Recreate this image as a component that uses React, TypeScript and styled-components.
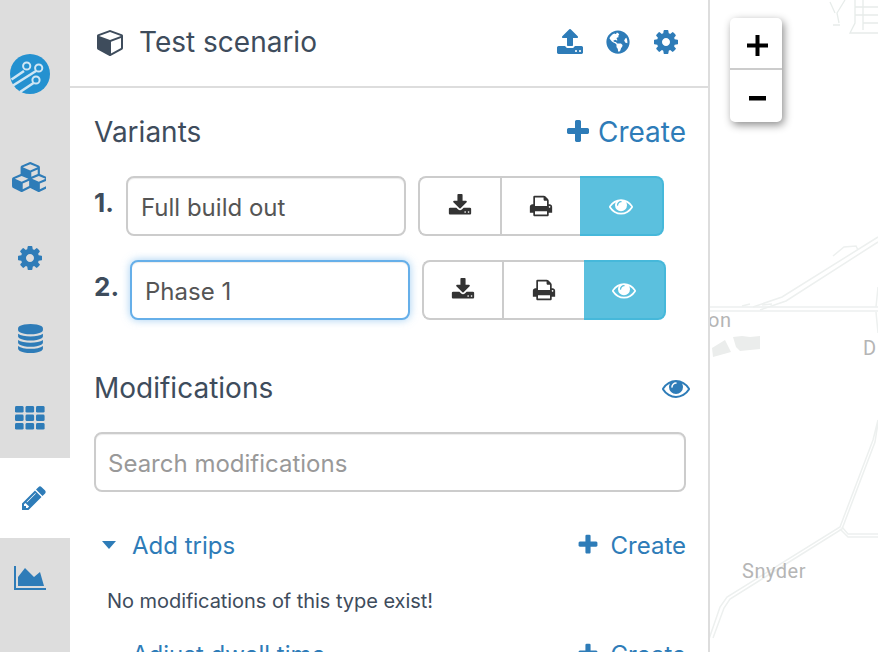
import * as React from 'react';
import styled, { createGlobalStyle } from 'styled-components';
import { FaGlobeAmericas } from 'react-icons/fa';

const blue = '#2e7cb8';
const slate = '#3e4c5c';

const glyphs = {
  plus: 'M1600 736v192q0 40-28 68t-68 28h-416v416q0 40-28 68t-68 28h-192q-40 0-68-28t-28-68v-416h-416q-40 0-68-28t-28-68v-192q0-40 28-68t68-28h416v-416q0-40 28-68t68-28h192q40 0 68 28t28 68v416h416q40 0 68 28t28 68z',
  eye: 'M1664 960q-152-236-381-353 61 104 61 225 0 185-131.5 316.5t-316.5 131.5-316.5-131.5-131.5-316.5q0-121 61-225-229 117-381 353 133 205 333.5 326.5t434.5 121.5 434.5-121.5 333.5-326.5zm-720-384q0-20-14-34t-34-14q-125 0-214.5 89.5t-89.5 214.5q0 20 14 34t34 14 34-14 14-34q0-86 61-147t147-61q20 0 34-14t14-34zm848 384q0 34-20 69-140 230-376.5 368.5t-499.5 138.5-499.5-139-376.5-368q-20-35-20-69t20-69q140-229 376.5-368t499.5-139 499.5 139 376.5 368q20 35 20 69z',
  cube: 'M896 1629l640-349v-636l-640 233v752zm-64-865l698-254-698-254-698 254zm832-252v768q0 35-18 65t-49 47l-704 384q-28 16-61 16t-61-16l-704-384q-31-17-49-47t-18-65v-768q0-40 23-73t61-47l704-256q22-8 44-8t44 8l704 256q38 14 61 47t23 73z',
  cog: 'M1152 896q0-106-75-181t-181-75-181 75-75 181 75 181 181 75 181-75 75-181zm512-109v222q0 12-8 23t-20 13l-185 28q-19 54-39 91 35 50 107 138 10 12 10 25t-9 23q-27 37-99 108t-94 71q-12 0-26-9l-138-108q-44 23-91 38-16 136-29 186-7 28-36 28h-222q-14 0-24.5-8.5t-11.5-21.5l-28-184q-49-16-90-37l-141 107q-10 9-25 9-14 0-25-11-126-114-165-168-7-10-7-23 0-12 8-23 15-21 51-66.5t54-70.5q-27-50-41-99l-183-27q-13-2-21-12.5t-8-23.5v-222q0-12 8-23t19-13l186-28q14-46 39-92-40-57-107-138-10-12-10-24 0-10 9-23 26-36 98.5-107.5t94.5-71.5q13 0 26 10l138 107q44-23 91-38 16-136 29-186 7-28 36-28h222q14 0 24.5 8.5t11.5 21.5l28 184q49 16 90 37l142-107q9-9 24-9 13 0 25 10 129 119 165 170 7 8 7 22 0 12-8 23-15 21-51 66.5t-54 70.5q26 50 41 98l183 28q13 2 21 12.5t8 23.5z',
  download: 'M1344 1344q0-26-19-45t-45-19-45 19-19 45 19 45 45 19 45-19 19-45zm256 0q0-26-19-45t-45-19-45 19-19 45 19 45 45 19 45-19 19-45zm128-224v320q0 40-28 68t-68 28h-1472q-40 0-68-28t-28-68v-320q0-40 28-68t68-28h465l135 136q58 56 136 56t136-56l136-136h464q40 0 68 28t28 68zm-325-569q17 41-14 70l-448 448q-18 19-45 19t-45-19l-448-448q-31-29-14-70 17-39 59-39h256v-448q0-26 19-45t45-19h256q26 0 45 19t19 45v448h256q42 0 59 39z',
  upload: 'M1344 1472q0-26-19-45t-45-19-45 19-19 45 19 45 45 19 45-19 19-45zm256 0q0-26-19-45t-45-19-45 19-19 45 19 45 45 19 45-19 19-45zm128-224v320q0 40-28 68t-68 28h-1472q-40 0-68-28t-28-68v-320q0-40 28-68t68-28h427q21 56 70.5 92t110.5 36h256q61 0 110.5-36t70.5-92h427q40 0 68 28t28 68zm-325-648q-17 40-59 40h-256v448q0 26-19 45t-45 19h-256q-26 0-45-19t-19-45v-448h-256q-42 0-59-40-17-39 14-69l448-448q18-19 45-19t45 19l448 448q31 30 14 69z',
  print: 'M448 1536h896v-256h-896v256zm0-640h896v-384h-160q-40 0-68-28t-28-68v-160h-640v640zm1152 64q0-26-19-45t-45-19-45 19-19 45 19 45 45 19 45-19 19-45zm128 0v416q0 13-9.5 22.5t-22.5 9.5h-224v160q0 40-28 68t-68 28h-960q-40 0-68-28t-28-68v-160h-224q-13 0-22.5-9.5t-9.5-22.5v-416q0-79 56.5-135.5t135.5-56.5h64v-544q0-40 28-68t68-28h672q40 0 88 20t76 48l152 152q28 28 48 76t20 88v256h64q79 0 135.5 56.5t56.5 135.5z',
  database: 'M896 768q237 0 443-43t325-127v170q0 69-103 128t-280 93.5-385 34.5-385-34.5-280-93.5-103-128v-170q119 84 325 127t443 43zm0 768q237 0 443-43t325-127v170q0 69-103 128t-280 93.5-385 34.5-385-34.5-280-93.5-103-128v-170q119 84 325 127t443 43zm0-384q237 0 443-43t325-127v170q0 69-103 128t-280 93.5-385 34.5-385-34.5-280-93.5-103-128v-170q119 84 325 127t443 43zm0-1152q208 0 385 34.5t280 93.5 103 128v128q0 69-103 128t-280 93.5-385 34.5-385-34.5-280-93.5-103-128v-128q0-69 103-128t280-93.5 385-34.5z',
  pencil: 'M491 1536l91-91-235-235-91 91v107h128v128h107zm523-928q0-22-22-22-10 0-17 7l-542 542q-7 7-7 17 0 22 22 22 10 0 17-7l542-542q7-7 7-17zm-54-192l416 416-832 832h-416v-416zm683 96q0 53-37 90l-166 166-416-416 166-165q36-38 90-38 53 0 91 38l235 234q37 39 37 91z',
  chart: 'M2048 1536v128h-2048v-1536h128v1408h1920zm-384-1024l256 896h-1664v-576l448-576 576 576z',
  cubes: 'M640 1632l384-192v-314l-384 164v342zm-64-454l404-173-404-173-404 173zm1088 454l384-192v-314l-384 164v342zm-64-454l404-173-404-173-404 173zm-448-293l384-165v-266l-384 164v267zm-64-379l441-189-441-189-441 189zm1088 518v416q0 36-19 67t-52 47l-448 224q-25 14-57 14t-57-14l-448-224q-4-2-6-4-2 2-6 4l-448 224q-25 14-57 14t-57-14l-448-224q-33-16-52-47t-19-67v-416q0-38 21.5-70t56.5-48l434-186v-400q0-38 21.5-70t56.5-48l448-192q23-10 50-10t50 10l448 192q35 16 56.5 48t21.5 70v400l434 186q36 16 57 48t21 70z'
};

interface GlyphProps {
  name: keyof typeof glyphs;
  size: number;
  wide?: boolean;
}

// font-awesome 4 shapes, the react-icons set only has the newer ones
const Glyph: React.FC<GlyphProps> = ({ name, size, wide }) => (
  <svg
    width={wide ? (size * 2048) / 1792 : size}
    height={size}
    viewBox={wide ? '0 0 2048 1792' : '0 0 1792 1792'}
    fill="currentColor"
  >
    <path fillRule={name === 'chart' ? 'nonzero' : 'evenodd'} d={glyphs[name]} />
  </svg>
);

const GridIcon: React.FC = () => (
  <svg width="30" height="24" viewBox="0 0 30 24" fill="currentColor">
    {[0, 8.5, 17].map(y =>
      [0, 10.5, 21].map(x => <rect key={`${x}-${y}`} x={x} y={y} width="8.6" height="6.6" rx="1.4" />)
    )}
  </svg>
);

const variants = [
  { label: '1.', name: 'Full build out', focused: false, widths: [82, 80, 84], numberWidth: 32 },
  { label: '2.', name: 'Phase 1', focused: true, widths: [80, 82, 82], numberWidth: 36 }
];

const App: React.FC = () => (
  <>
    <GlobalStyle />
    <Page>
      <Sidebar>
        <LogoItem>
          <Logo />
        </LogoItem>
        <NavItem $shift>
          <Glyph name="cubes" size={30} wide />
        </NavItem>
        <NavItem>
          <Glyph name="cog" size={28} />
        </NavItem>
        <NavItem>
          <Glyph name="database" size={29} />
        </NavItem>
        <NavItem>
          <GridIcon />
        </NavItem>
        <NavItem $active>
          <Glyph name="pencil" size={28} />
        </NavItem>
        <NavItem>
          <Glyph name="chart" size={28} wide />
        </NavItem>
      </Sidebar>
      <Panel>
        <PanelHeader>
          <Title>
            <Glyph name="cube" size={28} />
            <span>Test scenario</span>
          </Title>
          <HeaderActions>
            <Glyph name="upload" size={28} />
            <FaGlobeAmericas size={24} />
            <Glyph name="cog" size={28} />
          </HeaderActions>
        </PanelHeader>
        <PanelBody>
          <SectionHeading>
            <HeadingText>Variants</HeadingText>
            <CreateLink>
              <Glyph name="plus" size={28} />
              <span>Create</span>
            </CreateLink>
          </SectionHeading>
          {variants.map(v => (
            <VariantRow key={v.label}>
              <VariantNumber $width={v.numberWidth}>{v.label}</VariantNumber>
              <VariantInput $focused={v.focused} defaultValue={v.name} />
              <ButtonGroup>
                <GroupButton $width={v.widths[0]}>
                  <Glyph name="download" size={24} />
                </GroupButton>
                <GroupButton $width={v.widths[1]}>
                  <Glyph name="print" size={24} />
                </GroupButton>
                <GroupButton $width={v.widths[2]} $active>
                  <Glyph name="eye" size={24} />
                </GroupButton>
              </ButtonGroup>
            </VariantRow>
          ))}
          <ModificationsHeading>
            <HeadingText>Modifications</HeadingText>
            <EyeToggle>
              <Glyph name="eye" size={28} />
            </EyeToggle>
          </ModificationsHeading>
          <SearchInput placeholder="Search modifications" />
          <TypeRow>
            <TypeName>
              <Caret />
              <span>Add trips</span>
            </TypeName>
            <TypeCreate>
              <Glyph name="plus" size={24} />
              <span>Create</span>
            </TypeCreate>
          </TypeRow>
          <EmptyNote>No modifications of this type exist!</EmptyNote>
          <NextTypeRow>
            <TypeName>
              <CaretSpace />
              <span>Adjust dwell time</span>
            </TypeName>
            <TypeCreate>
              <Glyph name="plus" size={24} />
              <span>Create</span>
            </TypeCreate>
          </NextTypeRow>
        </PanelBody>
      </Panel>
      <MapArea>
        <MapDrawing />
        <ZoomControl>
          <ZoomButton $top>
            <svg width="21" height="21" viewBox="0 0 21 21">
              <path d="M8.5 0h4v8.5H21v4h-8.5V21h-4v-8.5H0v-4h8.5z" fill="#000" />
            </svg>
          </ZoomButton>
          <ZoomButton>
            <svg width="17" height="5" viewBox="0 0 17 5">
              <rect width="17" height="4.5" fill="#000" />
            </svg>
          </ZoomButton>
        </ZoomControl>
      </MapArea>
    </Page>
  </>
);

const Logo: React.FC = () => (
  <svg width="40" height="40" viewBox="0 0 40 40">
    <circle cx="20" cy="20" r="20" fill="#2491d0" />
    <g fill="none" stroke="#cfe6f4">
      <g strokeWidth="2.6">
        <path d="M1.5 25.5L14 17" />
        <path d="M3 31.5L26 17" />
        <path d="M10 38L23.5 29" />
      </g>
      <g strokeWidth="2">
        <circle cx="16.7" cy="12" r="3.6" />
        <circle cx="28.7" cy="14" r="3.6" />
        <circle cx="26" cy="26" r="3.6" />
      </g>
    </g>
  </svg>
);

const MapDrawing: React.FC = () => (
  <MapSvg viewBox="0 0 168 652">
    <g fill="none" stroke="#edf0ef" strokeWidth="1.5">
      <path d="M0 307h168M0 311h168" />
      <path d="M43 307l29-10L168 237M50 310l26-9L168 242" />
      <path d="M123 256l11-9 12-1 2 4" />
      <path d="M32 306l8-2M52 305l10-1" />
      <path d="M168 287l-2 20M166 312l2 21" />
      <path d="M168 420l-5 20-33 87L17 597l-7 10-11 32M168 423l-3 19-33 87L20 599l-6 9-11 30" />
      <path d="M132 527l6 7h30M130 529l8 8h30" />
    </g>
    <g fill="none" stroke="#e7ecea" strokeWidth="1.3">
      <path d="M135 0l-8 13 2 10M123 25h7M120 2l5 11" />
      <path d="M145 0v23l-5 10h28M145 7h23M153 0v30M145 15h23M153 23h15" />
    </g>
    <path d="M2 348l13-8 6 12-18 5z" fill="#ebedec" />
    <path d="M23 337l9-1 8 1 10-1v13l-20 2-4-4z" fill="#ebedec" />
    <MapLabel x="-2" y="327">
      on
    </MapLabel>
    <MapLabel x="153" y="355">
      D
    </MapLabel>
    <MapLabel x="32" y="578">
      Snyder
    </MapLabel>
  </MapSvg>
);

const GlobalStyle = createGlobalStyle`
  html, body {
    margin: 0;
    padding: 0;
    background: #fff;
    font-family: Inter, "Noto Sans", sans-serif;
  }
  * {
    box-sizing: border-box;
  }
`;

const Page = styled.div`
  display: flex;
  width: 878px;
  height: 652px;
  overflow: hidden;
`;

const Sidebar = styled.nav`
  width: 70px;
  flex-shrink: 0;
  background: #dddddd;
  padding-top: 34px;
`;

const LogoItem = styled.div`
  height: 104px;
  padding: 20px 0 0 10px;
`;

const NavItem = styled.div<{ $active?: boolean; $shift?: boolean }>`
  height: 80px;
  display: flex;
  align-items: center;
  justify-content: center;
  width: 70px;
  padding-right: ${p => (p.$active ? '2px' : p.$shift ? '12px' : '10px')};
  padding-bottom: ${p => (p.$shift ? '2px' : '0')};
  color: ${blue};
  background: ${p => (p.$active ? '#fff' : 'transparent')};
`;

const Panel = styled.section`
  width: 640px;
  flex-shrink: 0;
  border-right: 2px solid #dddddd;
  overflow: hidden;
`;

const PanelHeader = styled.header`
  height: 88px;
  display: flex;
  align-items: center;
  justify-content: space-between;
  border-bottom: 2px solid #dddddd;
  padding: 0 28px 3px 27px;
`;

const Title = styled.h1`
  display: flex;
  align-items: center;
  gap: 14px;
  margin: 0;
  font-size: 28px;
  font-weight: 400;
  color: ${slate};
`;

const HeaderActions = styled.div`
  display: flex;
  align-items: center;
  gap: 22px;
  color: ${blue};
`;

const PanelBody = styled.div`
  padding: 0 22px 0 24px;
`;

const SectionHeading = styled.div`
  height: 88px;
  display: flex;
  align-items: center;
  justify-content: space-between;
`;

const HeadingText = styled.h2`
  margin: 0;
  font-size: 28px;
  font-weight: 400;
  color: ${slate};
`;

const CreateLink = styled.a`
  display: flex;
  align-items: center;
  gap: 6px;
  font-size: 28px;
  color: ${blue};
`;

const VariantRow = styled.div`
  display: flex;
  align-items: center;
  height: 60px;
  margin-bottom: 24px;
`;

const VariantNumber = styled.span<{ $width: number }>`
  width: ${p => p.$width}px;
  font-size: 26px;
  font-weight: 700;
  color: ${slate};
  margin-top: -8px;
`;

const VariantInput = styled.input<{ $focused: boolean }>`
  width: 280px;
  height: 60px;
  margin-right: 12px;
  padding: 2px 12px 0 13px;
  border: 2px solid ${p => (p.$focused ? '#66afe9' : '#cccccc')};
  border-radius: 8px;
  font: 400 24px Inter, sans-serif;
  color: #555555;
  outline: none;
  box-shadow: ${p =>
    p.$focused
      ? 'inset 0 1px 1px rgba(0,0,0,.075), 0 0 8px rgba(102,175,233,.6)'
      : 'inset 0 1px 1px rgba(0,0,0,.075)'};
`;

const ButtonGroup = styled.div`
  display: flex;
  height: 60px;
`;

const GroupButton = styled.button<{ $width: number; $active?: boolean }>`
  width: ${p => p.$width}px;
  height: 60px;
  display: flex;
  align-items: center;
  justify-content: center;
  padding: 0;
  color: ${p => (p.$active ? '#fff' : '#333333')};
  background: ${p => (p.$active ? '#5bc0de' : '#fff')};
  border: 2px solid ${p => (p.$active ? '#46b8da' : '#cccccc')};
  border-left-width: ${p => (p.$active ? '0' : '2px')};
  border-right-width: 0;

  &:first-child {
    border-radius: 8px 0 0 8px;
  }
  &:last-child {
    border-right-width: 2px;
    border-radius: 0 8px 8px 0;
  }
`;

const ModificationsHeading = styled(SectionHeading)`
  height: 56px;
  margin-top: 40px;
  margin-bottom: 16px;
`;

const EyeToggle = styled.span`
  display: flex;
  margin-right: -4px;
  color: ${blue};
`;

const SearchInput = styled.input`
  display: block;
  width: 100%;
  height: 60px;
  padding: 2px 12px 0;
  border: 2px solid #cccccc;
  border-radius: 8px;
  font: 400 24px Inter, sans-serif;
  outline: none;
  box-shadow: inset 0 1px 1px rgba(0, 0, 0, 0.075);

  &::placeholder {
    color: #999999;
  }
`;

const TypeRow = styled.div`
  display: flex;
  align-items: center;
  justify-content: space-between;
  height: 30px;
  margin-top: 38px;
  color: ${blue};
  font-size: 24px;
`;

const NextTypeRow = styled(TypeRow)`
  margin-top: 24px;
`;

const TypeName = styled.div`
  display: flex;
  align-items: center;
`;

const Caret = styled.i`
  width: 0;
  height: 0;
  margin: 0 16px 0 8px;
  border-left: 7px solid transparent;
  border-right: 7px solid transparent;
  border-top: 8px solid ${blue};
`;

const CaretSpace = styled.i`
  width: 38px;
`;

const TypeCreate = styled.a`
  display: flex;
  align-items: center;
  gap: 11px;
`;

const EmptyNote = styled.p`
  margin: 27px 0 0 13px;
  font-size: 20px;
  line-height: 28px;
  letter-spacing: -0.05px;
  color: ${slate};
`;

const MapArea = styled.div`
  position: relative;
  flex: 1;
  background: #fff;
`;

const MapSvg = styled.svg`
  position: absolute;
  inset: 0;
  width: 168px;
  height: 652px;
`;

const MapLabel = styled.text`
  font-family: Roboto, sans-serif;
  font-size: 20px;
  letter-spacing: 0.5px;
  fill: #b5b5b5;
`;

const ZoomControl = styled.div`
  position: absolute;
  top: 18px;
  left: 20px;
  width: 52px;
  background: #fff;
  border-radius: 5px;
  box-shadow: 2px 3px 8px rgba(0, 0, 0, 0.45);
`;

const ZoomButton = styled.div<{ $top?: boolean }>`
  height: 52px;
  display: flex;
  align-items: center;
  justify-content: center;
  padding: 4px 0 0 2px;
  border-bottom: ${p => (p.$top ? '2px solid #cccccc' : 'none')};
`;

export default App;
